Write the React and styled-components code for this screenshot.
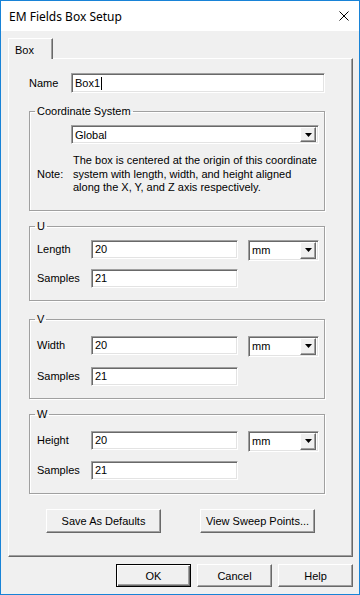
import styled, { createGlobalStyle } from "styled-components";

const GlobalStyle = createGlobalStyle`
  html, body {
    margin: 0;
    padding: 0;
    background: #ffffff;
  }
  * {
    box-sizing: border-box;
  }
`;

const Window = styled.div`
  width: 360px;
  height: 595px;
  border: 1px solid #1883d7;
  display: flex;
  flex-direction: column;
  background: #f0f0f0;
  font-family: "Liberation Sans", Arial, sans-serif;
  font-size: 11px;
  color: #000;
`;

const TitleBar = styled.div`
  height: 30px;
  flex-shrink: 0;
  background: #ffffff;
  display: flex;
  align-items: center;
  justify-content: space-between;
  padding: 0 10px 0 8px;
  font-family: "Noto Sans", sans-serif;
  font-size: 12px;
`;

const Body = styled.div`
  flex: 1;
  display: flex;
  flex-direction: column;
  padding: 7px 6px 7px 7px;
`;

const TabStrip = styled.div`
  height: 20px;
  display: flex;
`;

const Tab = styled.div`
  position: relative;
  z-index: 1;
  width: 45px;
  height: 21px;
  padding: 5px 0 0 6px;
  background: #f0f0f0;
  border-top: 1px solid #ffffff;
  border-left: 1px solid #ffffff;
  border-right: 1px solid #696969;
  box-shadow: inset -1px 0 0 #a0a0a0;
`;

const Panel = styled.div`
  height: 499px;
  display: flex;
  flex-direction: column;
  padding: 14px 27px 0 20px;
  border-top: 1px solid #ffffff;
  border-left: 1px solid #ffffff;
  border-right: 1px solid #696969;
  border-bottom: 1px solid #696969;
  box-shadow: inset -1px -1px 0 #a0a0a0;
`;

const NameRow = styled.div`
  display: flex;
  align-items: center;
  height: 20px;
`;

const Label = styled.span`
  width: ${(p) => p.$w || 42}px;
  flex-shrink: 0;
`;

const Field = styled.div`
  height: ${(p) => p.$h || 19}px;
  width: ${(p) => (p.$w ? `${p.$w}px` : "auto")};
  flex: ${(p) => (p.$w ? "none" : 1)};
  background: #ffffff;
  border-top: 1px solid #a0a0a0;
  border-left: 1px solid #a0a0a0;
  border-right: 1px solid #ffffff;
  border-bottom: 1px solid #ffffff;
  box-shadow: inset 1px 1px 0 #696969, inset -1px -1px 0 #e3e3e3;
  padding: 0 3px;
  display: flex;
  align-items: center;
  white-space: nowrap;
`;

const Caret = styled.span`
  display: inline-block;
  width: 1px;
  height: 13px;
  margin-left: 1px;
  background: #000;
`;

const Group = styled.fieldset`
  margin: ${(p) => p.$top || 12}px 0 0 0;
  padding: ${(p) => p.$pad || "7px 5px 12px 7px"};
  border: 1px solid #a0a0a0;
  box-shadow: 1px 1px 0 #ffffff, inset 1px 1px 0 #ffffff;
  min-width: 0;
`;

const Legend = styled.legend`
  margin-left: -2px;
  padding: 0 2px;
  line-height: 13px;
`;

const Combo = styled.div`
  height: ${(p) => p.$h || 19}px;
  width: ${(p) => (p.$w ? `${p.$w}px` : "auto")};
  margin: ${(p) => p.$m || 0};
  background: #ffffff;
  border-top: 1px solid #a0a0a0;
  border-left: 1px solid #a0a0a0;
  border-right: 1px solid #ffffff;
  border-bottom: 1px solid #ffffff;
  box-shadow: inset 1px 1px 0 #696969, inset -1px -1px 0 #e3e3e3;
  padding: 1px 2px 1px 3px;
  display: flex;
  align-items: center;
  justify-content: space-between;
`;

const DropButton = styled.span`
  width: 16px;
  align-self: stretch;
  background: #f0f0f0;
  border-top: 1px solid #ffffff;
  border-left: 1px solid #ffffff;
  border-right: 1px solid #696969;
  border-bottom: 1px solid #696969;
  box-shadow: inset -1px -1px 0 #a0a0a0;
  display: flex;
  align-items: center;
  justify-content: center;
`;

const NoteRow = styled.div`
  display: grid;
  grid-template-columns: 36px 1fr;
  align-items: center;
  margin-top: 10px;
  line-height: 13.5px;
`;

const AxisGrid = styled.div`
  display: grid;
  grid-template-columns: 54px 147px 1fr;
  grid-auto-rows: 19px;
  row-gap: ${(p) => p.$gap || 10}px;
  align-items: center;
`;

const ActionRow = styled.div`
  display: flex;
  gap: 39px;
  padding-left: 17px;
  margin-top: 15px;
`;

const Button = styled.button`
  width: ${(p) => p.$w || 75}px;
  height: ${(p) => p.$h || 23}px;
  padding: 0;
  font-family: "Liberation Sans", Arial, sans-serif;
  font-size: 11px;
  color: #000;
  background: #f0f0f0;
  border-top: 1px solid ${(p) => (p.$default ? "#000" : "#ffffff")};
  border-left: 1px solid ${(p) => (p.$default ? "#000" : "#ffffff")};
  border-right: 1px solid ${(p) => (p.$default ? "#000" : "#696969")};
  border-bottom: 1px solid ${(p) => (p.$default ? "#000" : "#696969")};
  box-shadow: ${(p) =>
    p.$default
      ? "inset 1px 1px 0 #ffffff, inset -1px -1px 0 #696969, inset -2px -2px 0 #a0a0a0"
      : "inset -1px -1px 0 #a0a0a0"};
`;

const Footer = styled.div`
  display: flex;
  justify-content: flex-end;
  gap: 6px;
  margin-top: 7px;
`;

function Arrow() {
  return (
    <svg width="7" height="4" viewBox="0 0 7 4">
      <polygon points="0,0 7,0 3.5,4" fill="#000" />
    </svg>
  );
}

function CloseIcon() {
  return (
    <svg width="10" height="10" viewBox="0 0 10 10">
      <path d="M0.5 0.5 L9.5 9.5 M9.5 0.5 L0.5 9.5" stroke="#000" strokeWidth="1" />
    </svg>
  );
}

function AxisGroup({ name, label, top, pad, gap }) {
  return (
    <Group $top={top} $pad={pad}>
      <Legend>{name}</Legend>
      <AxisGrid $gap={gap}>
        <span>{label}</span>
        <Field>20</Field>
        <Combo $h={21} $w={71} $m="2px 0 0 10px">
          <span>mm</span>
          <DropButton>
            <Arrow />
          </DropButton>
        </Combo>
        <span>Samples</span>
        <Field>21</Field>
      </AxisGrid>
    </Group>
  );
}

export default function App() {
  return (
    <>
      <GlobalStyle />
      <Window>
        <TitleBar>
          <span>EM Fields Box Setup</span>
          <CloseIcon />
        </TitleBar>
        <Body>
          <TabStrip>
            <Tab>Box</Tab>
          </TabStrip>
          <Panel>
            <NameRow>
              <Label>Name</Label>
              <Field $h={20}>
                Box1
                <Caret />
              </Field>
            </NameRow>
            <Group $top={12} $pad="7px 5px 15px 7px">
              <Legend>Coordinate System</Legend>
              <Combo $m="0 0 0 34px">
                <span>Global</span>
                <DropButton>
                  <Arrow />
                </DropButton>
              </Combo>
              <NoteRow>
                <span>Note:</span>
                <span>
                  The box is centered at the origin of this coordinate system with
                  length, width, and height aligned along the X, Y, and Z axis
                  respectively.
                </span>
              </NoteRow>
            </Group>
            <AxisGroup name="U" label="Length" top={9} pad="7px 5px 12px 7px" gap={10} />
            <AxisGroup name="V" label="Width" top={12} pad="10px 5px 12px 7px" gap={12} />
            <AxisGroup name="W" label="Height" top={9} pad="10px 5px 13px 7px" gap={11} />
            <ActionRow>
              <Button $w={115} $h={24}>Save As Defaults</Button>
              <Button $w={115} $h={24}>View Sweep Points...</Button>
            </ActionRow>
          </Panel>
          <Footer>
            <Button $default>OK</Button>
            <Button>Cancel</Button>
            <Button>Help</Button>
          </Footer>
        </Body>
      </Window>
    </>
  );
}
